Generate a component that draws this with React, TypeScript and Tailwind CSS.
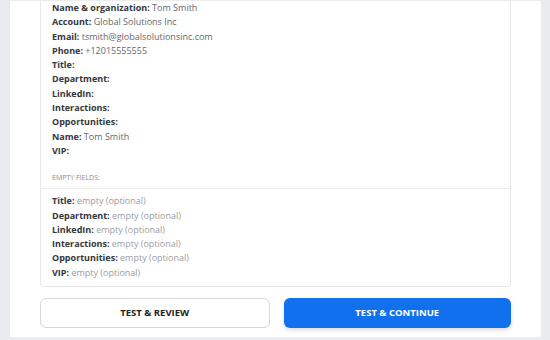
import React from "react";

type Field = { label: string; value?: string };

const fields: Field[] = [
  { label: "Name & organization", value: "Tom Smith" },
  { label: "Account", value: "Global Solutions Inc" },
  { label: "Email", value: "tsmith@globalsolutionsinc.com" },
  { label: "Phone", value: "+12015555555" },
  { label: "Title" },
  { label: "Department" },
  { label: "LinkedIn" },
  { label: "Interactions" },
  { label: "Opportunities" },
  { label: "Name", value: "Tom Smith" },
  { label: "VIP" },
];

const emptyFields = ["Title", "Department", "LinkedIn", "Interactions", "Opportunities", "VIP"];

const App: React.FC = () => {
  return (
    <div
      className="w-[550px] h-[340px] bg-[#e9ebee] overflow-hidden pl-[10px] pr-[9px]"
      style={{ fontFamily: '"Open Sans", "Liberation Sans", sans-serif' }}
    >
      <div className="bg-white h-[337px] border-t border-[#ececec] px-[30px]">
        {/* CARD */}
        <div className="border border-t-0 border-[#e8e8e8] rounded-b-[4px]">
          <div className="px-[11px] pb-[14px]">
            {fields.map((f, i) => (
              <div key={i} className="text-[9px] leading-[14.3px] text-[#36363b]">
                <span className="font-bold">{f.label}:</span>
                {f.value && <span className="text-[#66666b]"> {f.value}</span>}
              </div>
            ))}
          </div>
          <div className="px-[11px] pb-[5px] text-[7px] leading-[11px] uppercase text-[#8a8a8f]">
            Empty fields:
          </div>
          <div className="border-t border-[#ececec] px-[11px] pt-[5px] pb-[6px]">
            {emptyFields.map((f) => (
              <div key={f} className="text-[9px] leading-[14.3px] text-[#36363b]">
                <span className="font-bold">{f}:</span>
                <span className="text-[#9c9ca1]"> empty (optional)</span>
              </div>
            ))}
          </div>
        </div>

        {/* BUTTONS */}
        <div className="flex gap-[14px] mt-[11px]">
          <button className="flex-1 h-[30px] rounded-[6px] border border-[#d6d6d6] bg-white text-[9.5px] font-bold text-[#222] uppercase">
            Test &amp; Review
          </button>
          <button className="flex-1 h-[30px] rounded-[6px] bg-[#1170ee] text-[9.5px] font-bold text-white uppercase shadow-[0_2px_4px_rgba(0,0,0,0.15)]">
            Test &amp; Continue
          </button>
        </div>
      </div>
    </div>
  );
};

export default App;
